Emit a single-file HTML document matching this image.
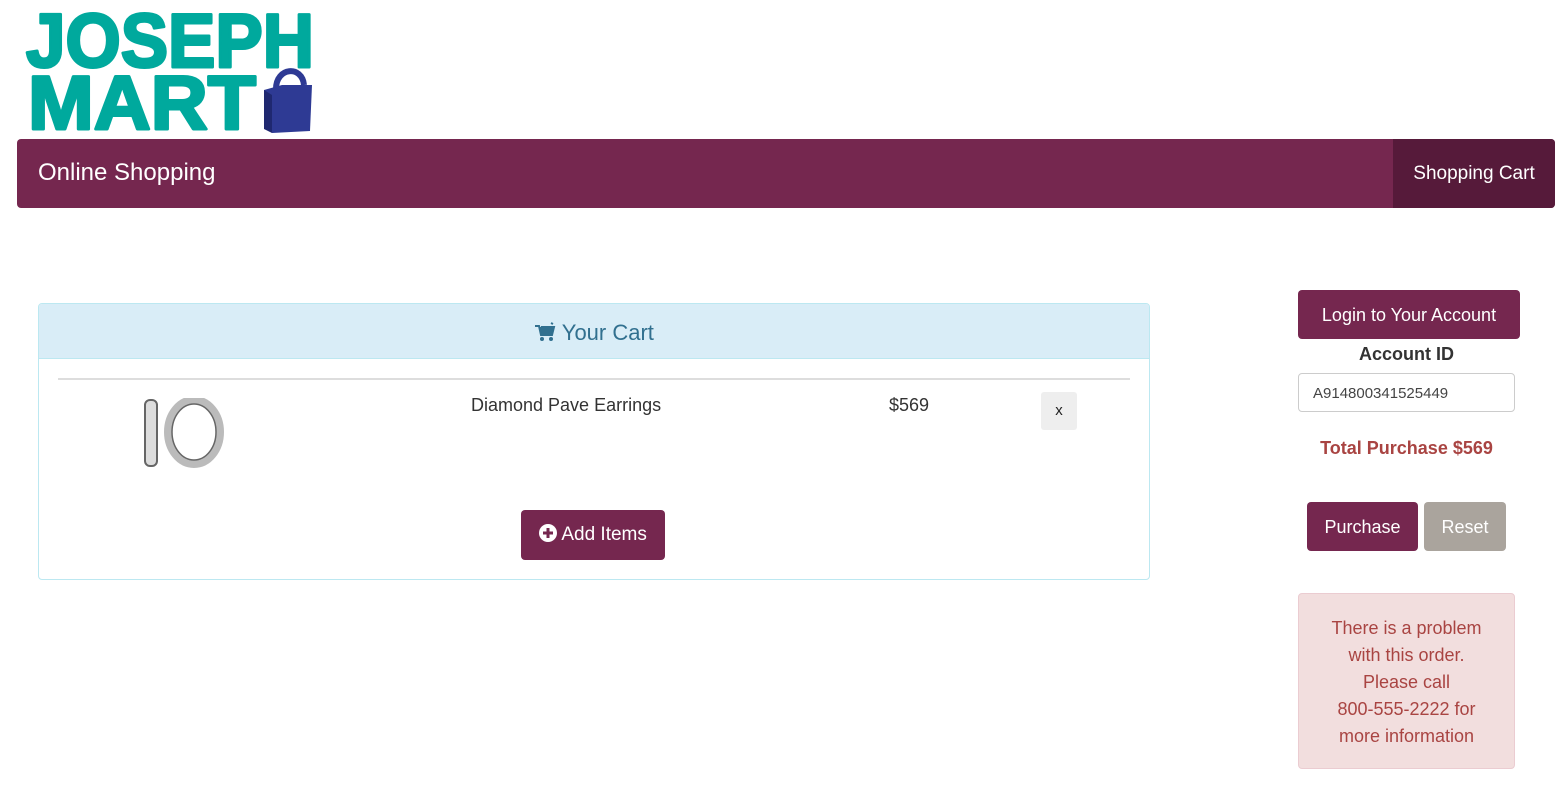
<!DOCTYPE html>
<html><head><meta charset="utf-8"><style>
*{box-sizing:border-box;margin:0;padding:0}
body{width:1562px;height:797px;background:#fff;font-family:"Liberation Sans",sans-serif;position:relative;overflow:hidden;color:#333}
.abs{position:absolute}
.nav{left:17px;top:139px;width:1538px;height:69px;background:#75274f;border-radius:4px;overflow:hidden}
.nav .t{left:21px;top:20px;color:#fff;font-size:24px}
.nav .r{right:0;top:0;width:162px;height:69px;background:#561a3a;color:#fff;font-size:19px;text-align:center;line-height:69px}
.panel{left:38px;top:303px;width:1112px;height:277px;border:1px solid #bce8f1;border-radius:4px;overflow:hidden}
.ph{height:55px;background:#d9edf7;border-bottom:1px solid #bce8f1;text-align:center;color:#31708f;font-size:22px;line-height:58px}
.btn{background:#75274f;color:#fff;border-radius:4px;text-align:center}
.alert{left:1298px;top:593px;width:217px;height:176px;background:#f2dede;border:1px solid #ebccd1;border-radius:4px;color:#a94442;font-size:18px;text-align:center;line-height:27px;padding-top:21px}
</style></head><body>
<svg class="abs" style="left:20px;top:5px" width="300" height="132">
<g font-family="Liberation Sans" font-weight="bold" font-size="76" fill="#00a99d" stroke="#00a99d" stroke-width="3" stroke-linejoin="round">
<text x="6" y="62" textLength="288" lengthAdjust="spacingAndGlyphs">JOSEPH</text>
<text x="8" y="124" textLength="228" lengthAdjust="spacingAndGlyphs">MART</text>
</g>
<path d="M244 85 L262 80 L292 80 L290 126 L252 128 Z" fill="#2e3a94"/>
<path d="M244 85 L252 90 L252 128 L244 124 Z" fill="#1f2870"/>
<path d="M256 84 C256 62 282 60 284 80" stroke="#2e3a94" stroke-width="6" fill="none"/>
</svg>
<div class="abs nav"><div class="abs t">Online Shopping</div><div class="abs r">Shopping Cart</div></div>
<div class="abs panel">
<div class="ph"><svg width="22" height="20" viewBox="0 0 22 20" style="vertical-align:-2px"><path d="M1 4h4l2 9h11l2-8H7" fill="#31708f" stroke="#31708f" stroke-width="2"/><path d="M17 1l2 1" stroke="#31708f" stroke-width="2"/><circle cx="8" cy="17" r="2" fill="#31708f"/><circle cx="17" cy="17" r="2" fill="#31708f"/></svg> Your Cart</div>
</div>
<div class="abs" style="left:58px;top:378px;width:1072px;height:2px;background:#ddd"></div>
<svg class="abs" style="left:140px;top:398px" width="84" height="70">
<rect x="5" y="2" width="12" height="66" rx="5" fill="#ddd" stroke="#666" stroke-width="2"/>
<ellipse cx="54" cy="34" rx="26" ry="32" fill="none" stroke="#bbb" stroke-width="8"/>
<ellipse cx="54" cy="34" rx="22" ry="28" fill="none" stroke="#666" stroke-width="1.5"/>
</svg>
<div class="abs" style="left:471px;top:395px;font-size:18px">Diamond Pave Earrings</div>
<div class="abs" style="left:889px;top:395px;font-size:18px">$569</div>
<div class="abs" style="left:1041px;top:392px;width:36px;height:38px;background:#eee;border-radius:3px;font-size:15px;text-align:center;line-height:38px;color:#222">x</div>
<div class="abs btn" style="left:521px;top:510px;width:144px;height:50px;line-height:50px;font-size:19px"><svg width="18" height="18" style="vertical-align:-2px"><circle cx="9" cy="9" r="9" fill="#fff"/><path d="M9 4v10M4 9h10" stroke="#75274f" stroke-width="3"/></svg> Add Items</div>
<div class="abs btn" style="left:1298px;top:290px;width:222px;height:49px;line-height:50px;font-size:18px">Login to Your Account</div>
<div class="abs" style="left:1298px;top:344px;width:217px;text-align:center;font-size:18px;font-weight:bold;color:#333">Account ID</div>
<div class="abs" style="left:1298px;top:373px;width:217px;height:39px;border:1px solid #ccc;border-radius:4px;padding-left:14px;line-height:40px;font-size:15px;color:#444">A914800341525449</div>
<div class="abs" style="left:1298px;top:438px;width:217px;text-align:center;font-size:18px;font-weight:bold;color:#a94442">Total Purchase $569</div>
<div class="abs btn" style="left:1307px;top:502px;width:111px;height:49px;line-height:51px;font-size:18px">Purchase</div>
<div class="abs btn" style="left:1424px;top:502px;width:82px;height:49px;line-height:51px;font-size:18px;background:#aaa49d">Reset</div>
<div class="abs alert">There is a problem<br>with this order.<br>Please call<br>800-555-2222 for<br>more information</div>
</body></html>
